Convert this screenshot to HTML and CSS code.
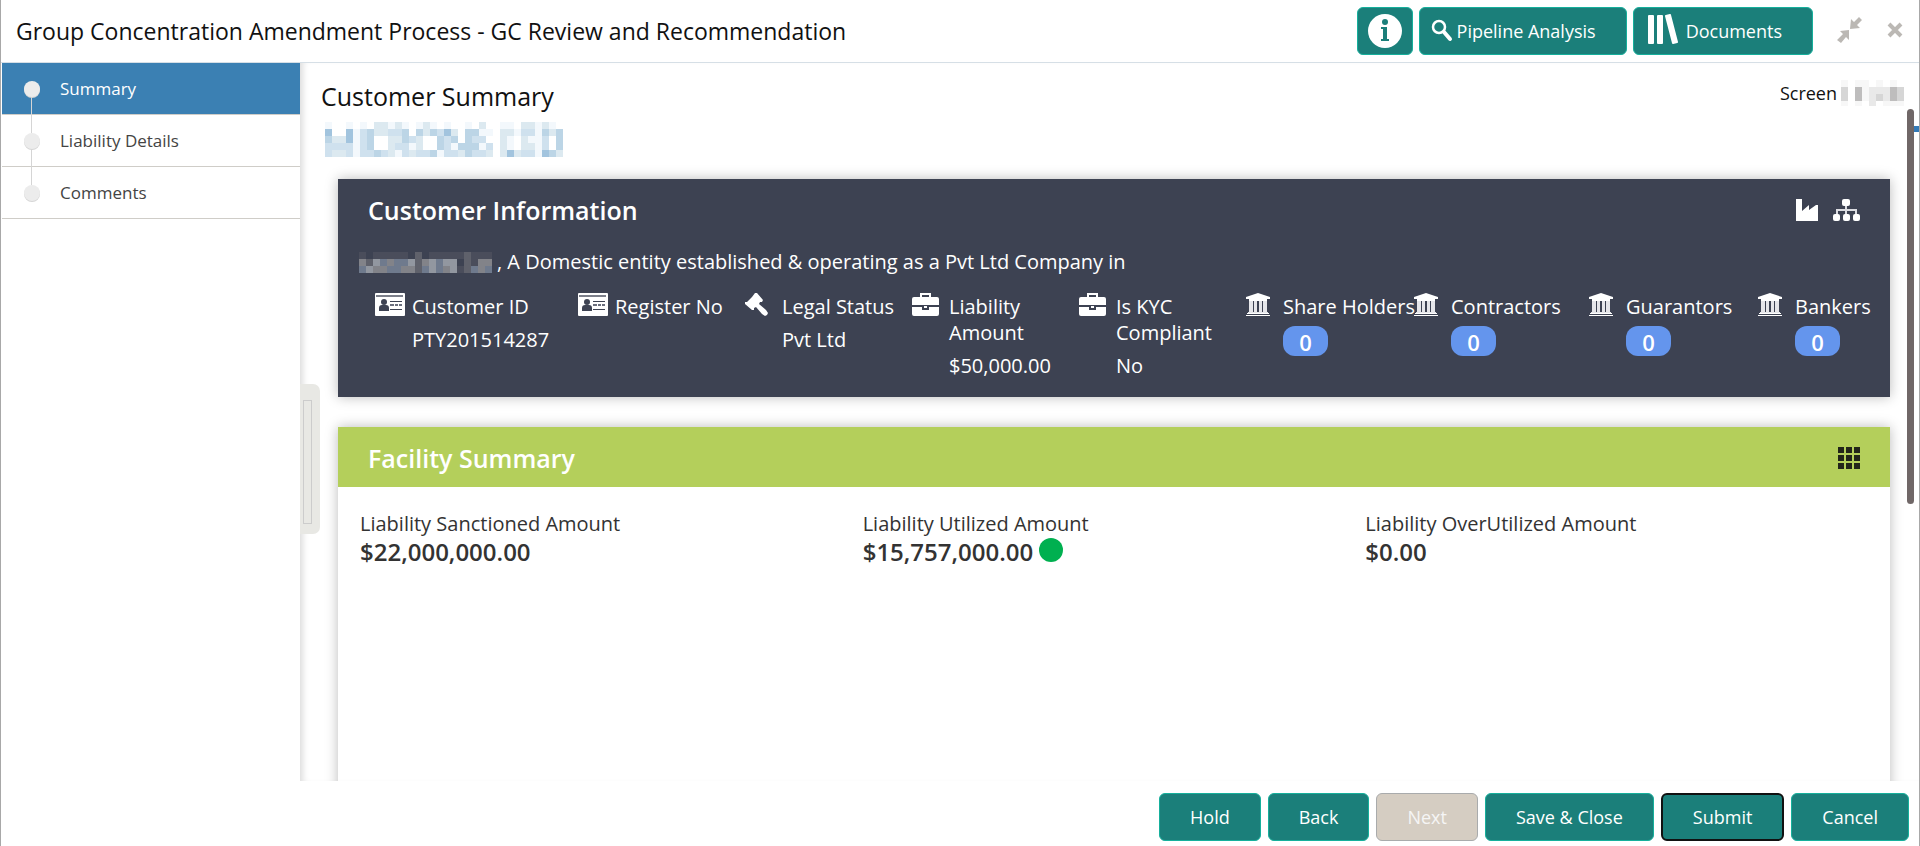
FILE: index.html
```html
<!DOCTYPE html>
<html lang="en">
<head>
    <meta charset="UTF-8">
    <meta name="viewport" content="width=device-width, initial-scale=1.0">
    <title>Group Concentration Amendment Process</title>
    <link rel="stylesheet" href="styles.css">
</head>
<body>
    <!-- shared icons -->
    <svg class="sprite" aria-hidden="true">
        <symbol id="icon-card" viewBox="0 0 30 23">
            <path fill="#fff" d="M1 0h28a1 1 0 0 1 1 1v21a1 1 0 0 1-1 1H1a1 1 0 0 1-1-1V1a1 1 0 0 1 1-1z"/>
            <path fill="#7c7f8a" d="M1 2h27v2H1z"/>
            <circle cx="9" cy="9" r="3" fill="#3d4252"/>
            <path fill="#3d4252" d="M4 18v-3q0-3 3-3h4q3 0 3 3v3zM15 8h12v1H15zM15 16h12v1H15z"/>
            <path stroke="#6b6f7d" stroke-width="2" d="M15 12h4M20 12h3M24 12h3" fill="none"/>
        </symbol>
        <symbol id="icon-gavel" viewBox="0 0 24 23">
            <path fill="#fff" d="M10 0l2 0 6 7-1 2-2 0-1 2 7 6 2 3-1 2-2 1-3-2-6-7-2 1 0 2-2 0-7-6 0-2 2 0 5-5z"/>
        </symbol>
        <symbol id="icon-briefcase" viewBox="0 0 27 23">
            <path fill="none" stroke="#fff" stroke-width="2" d="M9 5V1h9v4"/>
            <path fill="#fff" d="M2 4h23q2 0 2 2v6H0V6q0-2 2-2zM0 14h10v3h7v-3h10v7q0 2-2 2H2q-2 0-2-2z"/>
            <path fill="#fff" d="M12 13h3v2h-3z"/>
        </symbol>
        <symbol id="icon-bank" viewBox="0 0 24 23">
            <path fill="#fff" d="M12 0l12 4v2H0V4zM3 6h18v2H3zM1 20h22v1H1zM0 22h24v1H0z"/>
            <path fill="#e6e6ea" d="M3 8h4v11H3zM8 8h3v11H8zM13 8h3v11h-3zM17 8h4v11h-4zM2 19h20v1H2z"/>
        </symbol>
    </svg>

    <div class="page">
        <header class="topbar">
            <h1>Group Concentration Amendment Process - GC Review and Recommendation</h1>
            <div class="actions">
                <button type="button" class="btn btn-info" aria-label="Information">
                    <svg width="36" height="36" viewBox="0 0 36 36">
                        <circle cx="18" cy="18" r="17" fill="#fff"/>
                        <circle cx="18" cy="9" r="3" fill="#1b7f7a"/>
                        <path fill="#1b7f7a" d="M14 14h6v12h2v2h-8v-2h2V16h-2z"/>
                    </svg>
                </button>
                <button type="button" class="btn btn-pipeline">
                    <svg width="22" height="24" viewBox="0 0 22 24">
                        <circle cx="8" cy="8" r="6" fill="none" stroke="#fff" stroke-width="2.5"/>
                        <path d="M13 13l6 7" stroke="#fff" stroke-width="4" stroke-linecap="round"/>
                    </svg>
                    Pipeline Analysis
                </button>
                <button type="button" class="btn btn-documents">
                    <svg width="30" height="34" viewBox="0 0 30 34">
                        <rect x="0" y="1" width="6" height="29" rx="1" fill="#fff"/>
                        <rect x="9" y="1" width="6" height="29" rx="1" fill="#fff"/>
                        <path d="M18 2l4-1 7 27-4 1z" fill="#fff" stroke="#fff" stroke-width="2" stroke-linejoin="round"/>
                    </svg>
                    Documents
                </button>
                <button type="button" class="btn-plain" aria-label="Collapse">
                    <svg width="26" height="28" viewBox="0 0 26 28" fill="#bbb8b4">
                        <path d="M14 2l3 3 5-5 3 3-5 5 3 3-10 1zM12 13v10l-3-3-5 6-4-3 6-6-3-3z"/>
                    </svg>
                </button>
                <button type="button" class="btn-plain" aria-label="Close">
                    <svg width="16" height="18" viewBox="0 0 16 18">
                        <path d="M2 2l12 12M14 2L2 14" stroke="#bbb8b4" stroke-width="4"/>
                    </svg>
                </button>
            </div>
        </header>

        <div class="main">
            <nav class="steps">
                <a href="#summary" class="step active"><span class="dot"></span>Summary</a>
                <a href="#liability" class="step"><span class="dot"></span>Liability Details</a>
                <a href="#comments" class="step"><span class="dot"></span>Comments</a>
            </nav>

            <main class="content" id="summary">
                <div class="splitter"><span></span></div>
                <div class="content-head">
                    <h2>Customer Summary</h2>
                    <div class="screen">Screen <svg id="screen-mask" width="63" height="26"></svg></div>
                </div>
                <svg id="name-mask" class="name-mask" width="238" height="35"></svg>

                <section class="card info-card">
                    <div class="card-head">
                        <h3>Customer Information</h3>
                        <div class="card-icons">
                            <svg width="22" height="22" viewBox="0 0 22 22">
                                <path fill="#fff" d="M0 0h6v12l7-6v5l7-5h2v16H0z"/>
                            </svg>
                            <svg width="27" height="22" viewBox="0 0 27 22">
                                <path fill="none" stroke="#dcdde2" stroke-width="2" d="M13 6v9M4 15v-4h19v4"/>
                                <g fill="#fff">
                                    <rect x="9" y="0" width="8" height="7" rx="2"/>
                                    <rect x="0" y="15" width="7" height="7" rx="2"/>
                                    <rect x="10" y="15" width="7" height="7" rx="2"/>
                                    <rect x="20" y="15" width="7" height="7" rx="2"/>
                                </g>
                            </svg>
                        </div>
                    </div>
                    <p class="entity"><svg id="entity-mask" width="133" height="21"></svg> , A Domestic entity established &amp; operating as a Pvt Ltd Company in</p>
                    <div class="facts">
                        <div class="fact"><svg width="30" height="23"><use href="#icon-card"/></svg><div><div>Customer ID</div><div class="value">PTY201514287</div></div></div>
                        <div class="fact"><svg width="30" height="23"><use href="#icon-card"/></svg><div><div>Register No</div></div></div>
                        <div class="fact"><svg width="24" height="23"><use href="#icon-gavel"/></svg><div><div>Legal Status</div><div class="value">Pvt Ltd</div></div></div>
                        <div class="fact"><svg width="27" height="23"><use href="#icon-briefcase"/></svg><div><div>Liability<br>Amount</div><div class="value">$50,000.00</div></div></div>
                        <div class="fact"><svg width="27" height="23"><use href="#icon-briefcase"/></svg><div><div>Is KYC<br>Compliant</div><div class="value">No</div></div></div>
                        <div class="fact"><svg width="24" height="23"><use href="#icon-bank"/></svg><div><div>Share Holders</div><span class="badge">0</span></div></div>
                        <div class="fact"><svg width="24" height="23"><use href="#icon-bank"/></svg><div><div>Contractors</div><span class="badge">0</span></div></div>
                        <div class="fact"><svg width="24" height="23"><use href="#icon-bank"/></svg><div><div>Guarantors</div><span class="badge">0</span></div></div>
                        <div class="fact"><svg width="24" height="23"><use href="#icon-bank"/></svg><div><div>Bankers</div><span class="badge">0</span></div></div>
                    </div>
                </section>

                <section class="card facility-card">
                    <div class="card-head">
                        <h3>Facility Summary</h3>
                        <svg width="22" height="22" viewBox="0 0 22 22" fill="#22251a">
                            <path d="M0 0h6v6H0zM8 0h6v6H8zM16 0h6v6h-6zM0 8h6v6H0zM8 8h6v6H8zM16 8h6v6h-6zM0 16h6v6H0zM8 16h6v6H8zM16 16h6v6h-6z"/>
                        </svg>
                    </div>
                    <div class="amounts">
                        <div><div class="label">Liability Sanctioned Amount</div><div class="amount">$22,000,000.00</div></div>
                        <div><div class="label">Liability Utilized Amount</div><div class="amount">$15,757,000.00<span class="status-dot"></span></div></div>
                        <div><div class="label">Liability OverUtilized Amount</div><div class="amount">$0.00</div></div>
                    </div>
                </section>
            </main>
            <div class="scroll-thumb"></div>
            <div class="marker"></div>
        </div>

        <footer class="footer">
            <button type="button" class="btn">Hold</button>
            <button type="button" class="btn">Back</button>
            <button type="button" class="btn" disabled>Next</button>
            <button type="button" class="btn">Save &amp; Close</button>
            <button type="button" class="btn btn-submit">Submit</button>
            <button type="button" class="btn">Cancel</button>
        </footer>
    </div>

    <script>
        // Draws a masked value as a mosaic, one digit of each row per 7px tile
        function drawMask(id, rows, colors) {
            let tiles = '';
            rows.forEach((row, y) => {
                [...row].forEach((level, x) => {
                    tiles += `<rect x="${x * 7}" y="${y * 7}" width="7" height="7" fill="${colors[level]}"/>`;
                });
            });
            document.getElementById(id).innerHTML = tiles;
        }

        drawMask('name-mask', [
            '1001010221210121010010200110221210',
            '5005134223340424352044110221331424',
            '4225134002243200434043300210211304',
            '3333134002331200431444130210221304',
            '3223133432132334133243320252331542'
        ], ['#ffffff', '#f3f8fc', '#dce9f0', '#cfe1ee', '#bcd5e6', '#a2c4de']);

        drawMask('entity-mask', [
            '1011111020111112111',
            '4253433524535502144',
            '3544334423534512343'
        ], ['#3d4252', '#4a4d5b', '#5f616b', '#6f7a8d', '#828389', '#9297a0']);

        drawMask('screen-mask', [
            '101101010',
            '304122243',
            '304123243',
            '101020111'
        ], ['#ffffff', '#f7f7f7', '#e9e9e9', '#d6d6d6', '#bebdbd']);
    </script>
</body>
</html>
```
FILE: styles.css
```css
* {
    box-sizing: border-box;
}
body {
    margin: 0;
    font-family: "Open Sans", "Noto Sans", sans-serif;
    color: #111;
    background-color: #fff;
}
h1, h2, h3, p {
    margin: 0;
}
svg {
    display: block;
    flex: none;
}
.sprite {
    position: absolute;
    width: 0;
    height: 0;
}
.page {
    display: flex;
    flex-direction: column;
    height: 100vh;
    border-left: 1px solid #a8a8a8;
    border-right: 1px solid #a8a8a8;
}

/* top bar */
.topbar {
    display: flex;
    justify-content: space-between;
    align-items: center;
    height: 63px;
    padding: 0 16px 0 15px;
    border-bottom: 1px solid #d6dfe6;
}
h1 {
    font-size: 23px;
    font-weight: 400;
}
.actions {
    display: flex;
    align-items: center;
    gap: 6px;
}
.btn {
    display: flex;
    align-items: center;
    justify-content: center;
    height: 48px;
    padding: 0 30px;
    font-family: inherit;
    font-size: 18px;
    color: #fff;
    background-color: #1b7f7a;
    border: 1px solid #16b09c;
    border-radius: 6px;
    cursor: pointer;
}
.btn:disabled {
    color: #f5f5f5;
    background-color: #d5cdc2;
    border-color: #a9abac;
}
.btn-info {
    padding: 0 9px;
}
.btn-pipeline {
    gap: 4px;
    padding: 0 30px 0 11px;
}
.btn-documents {
    gap: 8px;
    padding: 0 30px 0 14px;
}
.btn-plain {
    margin-left: 18px;
    padding: 0;
    background: none;
    border: none;
    cursor: pointer;
}

/* sidebar */
.main {
    display: flex;
    flex: 1;
    min-height: 0;
    position: relative;
}
.steps {
    width: 299px;
    padding-left: 1px;
    flex: none;
}
.step {
    display: flex;
    align-items: center;
    gap: 20px;
    height: 52px;
    padding-left: 22px;
    font-size: 17px;
    color: #444;
    text-decoration: none;
    border-bottom: 1px solid #cfcdc8;
    position: relative;
}
.step.active {
    color: #fff;
    background-color: #3b80b3;
}
.dot {
    width: 16px;
    height: 16px;
    border-radius: 50%;
    background-color: #ececec;
    box-shadow: 0 1px 0 #d5d5d5;
}
.step:not(:last-child)::after {
    content: "";
    position: absolute;
    left: 29px;
    top: 34px;
    width: 1px;
    height: 36px;
    background-color: #d5d5d5;
    z-index: 1;
}

/* content */
.content {
    flex: 1;
    min-width: 0;
    padding: 16px 29px 0 21px;
    overflow: hidden;
    position: relative;
    box-shadow: inset 7px 0 6px -4px #ddd;
}
.splitter {
    position: absolute;
    left: 0;
    top: 321px;
    width: 20px;
    height: 150px;
    padding: 16px 8px 10px 3px;
    background-color: #e8e8e4;
    border-radius: 0 7px 7px 0;
}
.splitter span {
    display: block;
    height: 100%;
    border: 1px solid #ccc;
}
.content-head {
    display: flex;
    justify-content: space-between;
    align-items: flex-start;
    margin-right: -14px;
}
h2 {
    font-size: 25px;
    font-weight: 400;
    line-height: 34px;
}
.screen {
    display: flex;
    align-items: center;
    gap: 4px;
    font-size: 18px;
    line-height: 28px;
}
.name-mask {
    margin: 9px 4px 22px;
}
.card {
    margin-left: 17px;
    box-shadow: 0 0 12px #bbb;
}
.card-head {
    display: flex;
    justify-content: space-between;
    align-items: center;
    height: 60px;
    padding: 2px 30px 0;
}
h3 {
    font-size: 25px;
    font-weight: 600;
    color: #fff;
}
.info-card {
    height: 218px;
    font-size: 20px;
    line-height: 26px;
    color: #fff;
    background-color: #3d4252;
}
.card-icons {
    display: flex;
    gap: 15px;
}
.entity {
    display: flex;
    align-items: center;
    gap: 5px;
    padding: 10px 21px 0;
}
.facts {
    display: grid;
    grid-template-columns: 203fr 167fr 167fr 167fr 167fr 168fr 175fr 169fr 130fr;
    padding: 18px 2px 0 37px;
}
.fact {
    display: grid;
    grid-template-columns: 37px 1fr;
    min-width: 0;
    white-space: nowrap;
}
.fact > div {
    padding-top: 1px;
}
.value {
    margin-top: 7px;
}
.badge {
    display: block;
    width: 45px;
    height: 30px;
    margin-top: 6px;
    border-radius: 12px;
    background-color: #6495ed;
    font-size: 22px;
    font-weight: 600;
    line-height: 32px;
    text-align: center;
}
.facility-card {
    height: 500px;
    margin-top: 30px;
}
.facility-card .card-head {
    background-color: #b4cf5b;
}
.amounts {
    display: grid;
    grid-template-columns: 1fr 1fr 1fr;
    padding: 23px 22px 0;
    color: #333;
}
.label {
    font-size: 20px;
    line-height: 28px;
}
.amount {
    display: flex;
    gap: 6px;
    font-size: 24px;
    font-weight: 600;
    line-height: 28px;
}
.status-dot {
    width: 24px;
    height: 24px;
    border-radius: 50%;
    background-color: #00b050;
}
.scroll-thumb {
    position: absolute;
    right: 5px;
    top: 46px;
    width: 7px;
    height: 395px;
    border-radius: 4px;
    background-color: #706767;
}
.marker {
    position: absolute;
    right: 0;
    top: 63px;
    width: 5px;
    height: 6px;
    background-color: #337ab7;
}

/* footer */
.footer {
    display: flex;
    justify-content: flex-end;
    gap: 7px;
    padding: 12px 10px 5px;
}
.btn-submit {
    border: 2px solid #111;
}
```
